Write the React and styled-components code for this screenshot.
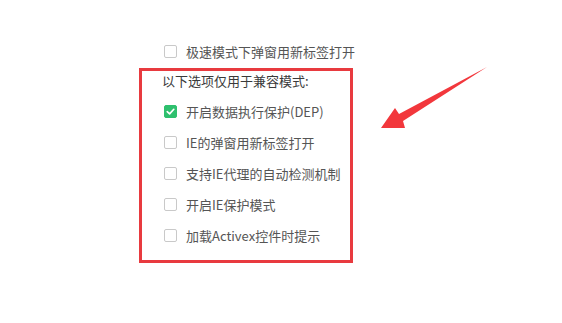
import React from 'react'
import styled, { createGlobalStyle } from 'styled-components'

const Global = createGlobalStyle`
  html, body { margin: 0; padding: 0; background: #fff; }
  body { font-family: "Microsoft YaHei", "Noto Sans CJK SC", "Noto Sans", sans-serif; }
`;

const Page = styled.div`
  position: relative;
  width: 562px;
  height: 323px;
  overflow: hidden;
  padding-top: 36px;
  padding-left: 139px;
  box-sizing: border-box;
`;

const Row = styled.label`
  display: flex;
  align-items: center;
  height: 31px;
  padding-left: ${p => p.$indent || 0}px;
  font-size: 13px;
  color: #555;
  gap: 9px;
  white-space: nowrap;
`;

const Box = styled.span`
  width: 13px;
  height: 13px;
  border-radius: 2px;
  flex: none;
  box-sizing: border-box;
  border: 1px solid ${p => (p.$on ? '#2ec06e' : '#c9c9c9')};
  background: ${p => (p.$on ? '#2ec06e' : '#fff')};
  display: flex;
  align-items: center;
  justify-content: center;
`;

const Frame = styled.div`
  width: 214px;
  height: 195px;
  margin-top: 1px;
  box-sizing: border-box;
  border: 3px solid #e83a3f;
  padding: 0 0 0 20px;
`;

const Title = styled.div`
  font-size: 13px;
  color: #3a3a3a;
  height: 25px;
  line-height: 20px;
  white-space: nowrap;
`;

const Arrow = styled.svg`
  position: absolute;
  left: 0;
  top: 0;
`;

const Check = ({ on }) => (
  <Box $on={on}>
    {on && (
      <svg width="11" height="11" viewBox="0 0 10 10">
        <path d="M2 5.2 L4.2 7.2 L8 3" fill="none" stroke="#fff" strokeWidth="1.5" strokeLinecap="round" strokeLinejoin="round" />
      </svg>
    )}
  </Box>
);

const options = [
  { text: '开启数据执行保护(DEP)', on: true },
  { text: 'IE的弹窗用新标签打开' },
  { text: '支持IE代理的自动检测机制' },
  { text: '开启IE保护模式' },
  { text: '加载Activex控件时提示' },
];

export default function App() {
  return (
    <>
      <Global />
      <Page>
        <Row $indent={25}>
          <Check />
          极速模式下弹窗用新标签打开
        </Row>
        <Frame>
          <Title>以下选项仅用于兼容模式:</Title>
          {options.map(o => (
            <Row key={o.text} $indent={2}>
              <Check on={o.on} />
              {o.text}
            </Row>
          ))}
        </Frame>
        <Arrow width="562" height="323" viewBox="0 0 562 323">
          <polygon
            points="487,67 403,121 405,128 381,128 395,108 399,114"
            fill="#f2373c"
          />
        </Arrow>
      </Page>
    </>
  )
}
